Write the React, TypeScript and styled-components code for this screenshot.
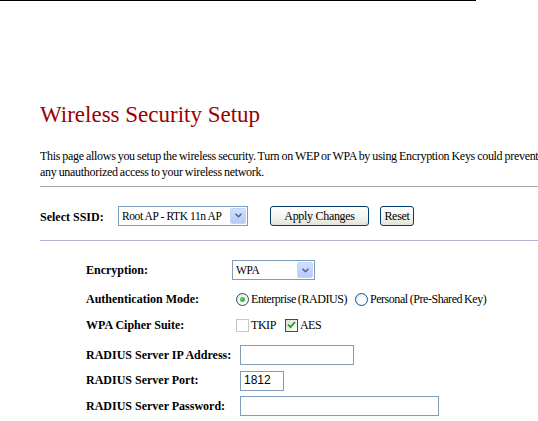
import React from "react";
import styled, { createGlobalStyle } from "styled-components";

const Global = createGlobalStyle`
  html, body { margin: 0; padding: 0; background: #fff; }
  body { font-family: "Liberation Serif", "Times New Roman", serif; color: #000; }
`;

const TopRule = styled.div`
  width: 476px;
  height: 1px;
  background: #000;
`;

const Content = styled.div`
  padding: 100px 0 0 40px;
`;

const Title = styled.h1`
  margin: 0;
  font-size: 23px;
  line-height: 28px;
  font-weight: normal;
  color: #990000;
  white-space: nowrap;
`;

const Intro = styled.p`
  margin: 19px 0 0;
  font-size: 12px;
  line-height: 16px;
  white-space: nowrap;
  letter-spacing: -0.3px;
  word-spacing: -0.5px;
`;

const Rule = styled.div<{ $color: string }>`
  height: 1px;
  background: ${(p) => p.$color};
`;

const GreyRule = styled(Rule)`
  margin-top: 6px;
`;

const SsidRow = styled.div`
  display: flex;
  align-items: center;
  height: 21px;
  margin: 18px 0 14px;
`;

const BoldLabel = styled.span`
  font-size: 12px;
  font-weight: bold;
  white-space: nowrap;
`;

const SsidLabel = styled(BoldLabel)`
  width: 78px;
  padding-top: 3px;
`;

const SelectBox = styled.div<{ $width: number }>`
  width: ${(p) => p.$width}px;
  height: 20px;
  box-sizing: border-box;
  border: 1px solid #7f9db9;
  display: flex;
  align-items: stretch;
  background: #fff;
  font-size: 11.5px;
`;

const SelectText = styled.span`
  flex: 1;
  padding: 1px 0 0 3px;
  line-height: 16px;
  white-space: nowrap;
  overflow: hidden;
  letter-spacing: -0.4px;
`;

const SelectArrow = styled.span`
  width: 16px;
  margin: 1px;
  border-radius: 2px;
  background: linear-gradient(#d2e0fd, #b5cbf7);
  border: 1px solid #c3d3fd;
  box-sizing: border-box;
  display: flex;
  align-items: center;
  justify-content: center;
`;

const Button = styled.button<{ $width: number }>`
  width: ${(p) => p.$width}px;
  height: 20px;
  box-sizing: border-box;
  border: 1px solid #003c74;
  border-radius: 3px;
  background: linear-gradient(#ffffff 0%, #f3f3ee 60%, #e3e2d8 100%);
  font-family: "Liberation Serif", "Times New Roman", serif;
  font-size: 12px;
  line-height: 16px;
  letter-spacing: -0.3px;
  padding: 0;
  color: #000;
`;

const ApplyButton = styled(Button)`
  margin-left: 22px;
`;

const ResetButton = styled(Button)`
  margin-left: 11px;
`;

const FormGrid = styled.div<{ $labelWidth: number; $top: number }>`
  display: grid;
  grid-template-columns: ${(p) => p.$labelWidth}px 1fr;
  align-items: center;
  margin: ${(p) => p.$top}px 0 0 46px;
`;

const Cell = styled.div<{ $h: number }>`
  height: ${(p) => p.$h}px;
  display: flex;
  align-items: center;
`;

const Option = styled.label<{ $gap?: number }>`
  display: inline-flex;
  align-items: center;
  font-size: 12px;
  white-space: nowrap;
  letter-spacing: -0.45px;
  word-spacing: -0.5px;
  margin-right: ${(p) => p.$gap ?? 2}px;
`;

const Radio = styled.span<{ $on?: boolean }>`
  width: 13px;
  height: 13px;
  box-sizing: border-box;
  border-radius: 50%;
  border: 1px solid #1c5180;
  background: radial-gradient(circle at 60% 60%, #ffffff 30%, #dcdcd4 100%);
  margin: 0 2px 0 4px;
  display: flex;
  align-items: center;
  justify-content: center;
  &::after {
    content: "";
    display: ${(p) => (p.$on ? "block" : "none")};
    width: 5px;
    height: 5px;
    border-radius: 50%;
    background: radial-gradient(circle at 40% 40%, #5fd35f, #21a121);
  }
`;

const Check = styled.span<{ $on?: boolean }>`
  width: 13px;
  height: 13px;
  box-sizing: border-box;
  border: 1px solid ${(p) => (p.$on ? "#1c5180" : "#cac8bb")};
  background: ${(p) => (p.$on ? "linear-gradient(135deg,#dcdcd7,#fff)" : "#fff")};
  margin: 0 2px 0 4px;
  display: flex;
  align-items: center;
  justify-content: center;
`;

const TextInput = styled.div<{ $width: number }>`
  width: ${(p) => p.$width}px;
  height: 20px;
  box-sizing: border-box;
  border: 1px solid #7f9db9;
  background: #fff;
  font-size: 12px;
  line-height: 17px;
  padding-left: 3px;
  font-family: "Liberation Sans Narrow", "Liberation Sans", sans-serif;
`;

const ArrowIcon = () => (
  <svg width="7" height="5" viewBox="0 0 7 5">
    <path d="M0.5 0.8 L3.5 3.8 L6.5 0.8" fill="none" stroke="#4d6185" strokeWidth="1.4" />
  </svg>
);

const Tick = () => (
  <svg width="9" height="8" viewBox="0 0 9 8">
    <path d="M1 3.5 L3.5 6.2 L8 1" fill="none" stroke="#21a121" strokeWidth="1.8" />
  </svg>
);

export default function App() {
  return (
    <>
      <Global />
      <TopRule />
      <Content>
        <Title>Wireless Security Setup</Title>
        <Intro>
          This page allows you setup the wireless security. Turn on WEP or WPA by using Encryption Keys could prevent
          <br />
          any unauthorized access to your wireless network.
        </Intro>
        <GreyRule $color="#a8a8a0" />
        <SsidRow>
          <SsidLabel>Select SSID:</SsidLabel>
          <SelectBox $width={130}>
            <SelectText>Root AP - RTK 11n AP</SelectText>
            <SelectArrow>
              <ArrowIcon />
            </SelectArrow>
          </SelectBox>
          <ApplyButton $width={99}>Apply Changes</ApplyButton>
          <ResetButton $width={34}>Reset</ResetButton>
        </SsidRow>
        <Rule $color="#b8b4d8" />
        <FormGrid $labelWidth={146} $top={18}>
          <Cell $h={22}>
            <BoldLabel>Encryption:</BoldLabel>
          </Cell>
          <Cell $h={22}>
            <SelectBox $width={83}>
              <SelectText>WPA</SelectText>
              <SelectArrow>
                <ArrowIcon />
              </SelectArrow>
            </SelectBox>
          </Cell>
          <Cell $h={36}>
            <BoldLabel>Authentication Mode:</BoldLabel>
          </Cell>
          <Cell $h={36}>
            <Option $gap={4}>
              <Radio $on />
              Enterprise (RADIUS)
            </Option>
            <Option>
              <Radio />
              Personal (Pre-Shared Key)
            </Option>
          </Cell>
          <Cell $h={16}>
            <BoldLabel>WPA Cipher Suite:</BoldLabel>
          </Cell>
          <Cell $h={16}>
            <Option $gap={5}>
              <Check />
              TKIP
            </Option>
            <Option>
              <Check $on>
                <Tick />
              </Check>
              AES
            </Option>
          </Cell>
        </FormGrid>
        <FormGrid $labelWidth={154} $top={9}>
          <Cell $h={26}>
            <BoldLabel>RADIUS Server IP Address:</BoldLabel>
          </Cell>
          <Cell $h={26}>
            <TextInput $width={114} />
          </Cell>
          <Cell $h={25}>
            <BoldLabel>RADIUS Server Port:</BoldLabel>
          </Cell>
          <Cell $h={25}>
            <TextInput $width={44}>1812</TextInput>
          </Cell>
          <Cell $h={26}>
            <BoldLabel>RADIUS Server Password:</BoldLabel>
          </Cell>
          <Cell $h={26}>
            <TextInput $width={199} />
          </Cell>
        </FormGrid>
      </Content>
    </>
  );
}
